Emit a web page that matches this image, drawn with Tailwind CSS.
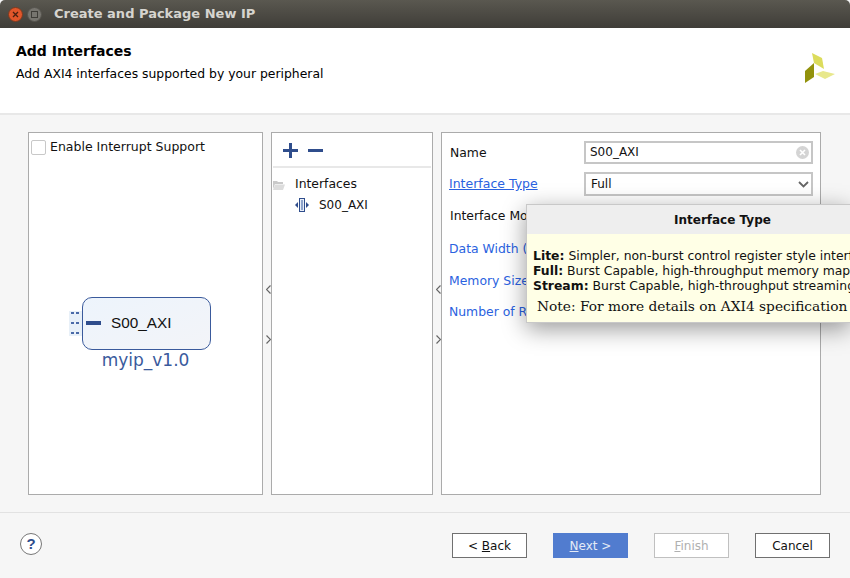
<!DOCTYPE html>
<html lang="en">
<head>
    <meta charset="UTF-8">
    <title>Create and Package New IP</title>
    <script src="https://cdn.jsdelivr.net/npm/@tailwindcss/browser@4"></script>
</head>
<body class="w-[850px] h-[578px] overflow-hidden relative flex flex-col bg-[#f6f6f6] font-['DejaVu_Sans',sans-serif] text-[12px] text-black">

    <!-- Title bar -->
    <div class="h-[28px] shrink-0 flex items-center bg-gradient-to-b from-[#5a5850] to-[#3f3d38] rounded-t-[5px]">
        <div class="w-[15px] h-[15px] ml-[8px] rounded-full bg-[#e2562a] border border-[#7a3a20] flex items-center justify-center">
            <svg width="7" height="7" viewBox="0 0 7 7"><path d="M1 1l5 5M6 1l-5 5" stroke="#4a2010" stroke-width="1.3"/></svg>
        </div>
        <div class="w-[15px] h-[15px] ml-[4px] rounded-full bg-[#77756f] border border-[#55534d] flex items-center justify-center">
            <div class="w-[7px] h-[7px] border border-[#3f3d38]"></div>
        </div>
        <span class="ml-[12px] font-bold text-[13px] text-[#d6d4cf]">Create and Package New IP</span>
    </div>

    <!-- Page header -->
    <div class="h-[87px] shrink-0 bg-white border-b-2 border-[#e8e8e8] flex justify-between pl-[16px] pr-[15px] pt-[15px]">
        <div>
            <h1 class="font-bold text-[14px] leading-[17px]">Add Interfaces</h1>
            <p class="mt-[6px] text-[12.4px] leading-[15px]">Add AXI4 interfaces supported by your peripheral</p>
        </div>
        <svg class="mt-[10px]" width="30" height="30" viewBox="0 0 30 30">
            <path d="M7 0l10 5 2 11-10-6z" fill="#dcdc5c"/>
            <path d="M10 21l8-3 12 3-10 5z" fill="#e8e88c"/>
            <path d="M0 18l9-8v14l-9 6z" fill="#92920c"/>
        </svg>
    </div>

    <!-- Panels -->
    <div class="h-[398px] shrink-0 flex gap-[8px] pl-[28px] pt-[17px] pb-[17px] border-b border-[#e2e2e2]">

        <!-- Diagram panel -->
        <div class="w-[235px] bg-white border border-[#ababab] relative">
            <label class="flex items-center h-[28px] pl-[2px]">
                <span class="w-[15px] h-[15px] bg-white border border-[#c8c8c8] rounded-[2px]"></span>
                <span class="ml-[4px] text-[12.5px] text-[#111]">Enable Interrupt Support</span>
            </label>
            <div class="absolute left-[53px] top-[164px] w-[129px] h-[53px] rounded-[10px] border border-[#3a5a9c] bg-gradient-to-br from-[#edf4fc] to-[#f3f4f8] flex items-center">
                <span class="ml-[28px] text-[#111] font-['Liberation_Sans',sans-serif] text-[15.3px]">S00_AXI</span>
            </div>
            <svg class="absolute left-[40px] top-[178px]" width="13" height="25" viewBox="0 0 13 25">
                <rect width="13" height="25" fill="#e8f0f8"/>
                <path d="M2 1h3v2H2zM7 1h3v2H7zM2 11h3v2H2zM7 11h3v2H7zM2 21h3v2H2zM7 21h3v2H7z" fill="#4a6aa8"/>
            </svg>
            <div class="absolute left-[57px] top-[188px] w-[15px] h-[4px] bg-[#2f4d8c]"></div>
            <div class="absolute left-0 right-0 top-[217px] text-center text-[17px] leading-[20px] text-[#3a5a9c]">myip_v1.0</div>
            <svg class="absolute right-[-9px] top-[152px]" width="5" height="9" viewBox="0 0 5 9"><path d="M4.5.5l-4 4 4 4" fill="none" stroke="#666" stroke-width="1.2"/></svg>
            <svg class="absolute right-[-9px] top-[202px]" width="5" height="9" viewBox="0 0 5 9"><path d="M.5.5l4 4-4 4" fill="none" stroke="#666" stroke-width="1.2"/></svg>
        </div>

        <!-- Interface tree panel -->
        <div class="w-[162px] bg-white border border-[#ababab] relative">
            <div class="h-[35px] mx-[1px] pt-[1px] border-b-2 border-[#e8e8e8] flex items-center pl-[10px] gap-[10px]">
                <svg width="15" height="15" viewBox="0 0 15 15"><path d="M6 0h3v6h6v3H9v6H6V9H0V6h6z" fill="#2f4d8c"/></svg>
                <div class="w-[15px] h-[3px] bg-[#2f4d8c]"></div>
            </div>
            <div class="flex items-center h-[17px] mt-[8px] pl-[1px]">
                <svg width="12" height="10" viewBox="0 0 12 10"><path d="M0 1h4l1 1h5v2H2L0 9z" fill="#c9c9c9"/><path d="M2 4.500h10L10 10H0z" fill="#dcdcdc"/></svg>
                <span class="ml-[10px] text-[12.4px] text-[#111]">Interfaces</span>
            </div>
            <div class="flex items-center h-[17px] mt-[3px] pl-[23px]">
                <svg width="14" height="14" viewBox="0 0 14 14"><path d="M0 7l3-3v6z" fill="#2f4d8c"/><path d="M14 7l-3-3v6z" fill="#2f4d8c"/><rect x="4.500" y=".5" width="5" height="13" fill="#e8eef8" stroke="#2f4d8c"/><rect x="6" y="2" width="2" height="10" fill="#8fa5cc"/></svg>
                <span class="ml-[10px] text-[#111]">S00_AXI</span>
            </div>
            <svg class="absolute right-[-9px] top-[152px]" width="5" height="9" viewBox="0 0 5 9"><path d="M4.500.5l-4 4 4 4" fill="none" stroke="#666" stroke-width="1.2"/></svg>
            <svg class="absolute right-[-9px] top-[202px]" width="5" height="9" viewBox="0 0 5 9"><path d="M.5.5l4 4-4 4" fill="none" stroke="#666" stroke-width="1.2"/></svg>
        </div>

        <!-- Properties panel -->
        <div class="w-[380px] bg-white border border-[#ababab] pt-[4px] pr-[7px] pl-[7px]">
            <div class="grid grid-cols-[135px_1fr] items-center grid-rows-[31px_31px_33px_32px_32px_31px] leading-[15px] text-[12.4px]">
                <span class="pl-[1px] text-[#111]">Name</span>
                <div class="h-[23px] border-2 border-[#c6c6c6] flex items-center justify-between pl-[4px] pr-[2px]">
                    <span class="text-[12px] text-[#111]">S00_AXI</span>
                    <div class="w-[13px] h-[13px] rounded-full bg-[#d4d4d4] flex items-center justify-center">
                        <svg width="7" height="7" viewBox="0 0 7 7"><path d="M1 1l5 5M6 1l-5 5" stroke="#fff" stroke-width="1.600"/></svg>
                    </div>
                </div>
                <a class="text-[12.5px] text-[#2a62e0] underline">Interface Type</a>
                <div class="h-[24px] pt-[1px] border-2 border-[#c6c6c6] flex items-center justify-between pl-[5px] pr-[2px]">
                    <span class="text-[12px] text-[#111]">Full</span>
                    <svg width="11" height="7" viewBox="0 0 11 7"><path d="M1 1l4.500 4.500L10 1" fill="none" stroke="#666" stroke-width="1.800"/></svg>
                </div>
                <span class="pl-[1px] text-[#111]">Interface Mode</span>
                <div class="h-[23px] border-2 border-[#c6c6c6]"></div>
                <span class="text-[#2a62e0]">Data Width (Bits)</span>
                <div class="h-[23px] border-2 border-[#c6c6c6]"></div>
                <span class="text-[#2a62e0]">Memory Size (Bytes)</span>
                <div class="h-[23px] border-2 border-[#c6c6c6]"></div>
                <span class="text-[#2a62e0]">Number of Registers</span>
                <div class="h-[23px] border-2 border-[#c6c6c6]"></div>
            </div>
        </div>
    </div>

    <!-- Footer -->
    <div class="flex-1 flex items-start pt-[20px] pl-[20px]">
        <div class="w-[22px] h-[22px] rounded-full bg-white border border-[#777] flex items-center justify-center font-['Liberation_Sans',sans-serif] font-bold text-[15px] text-[#2f4d8c]">?</div>
        <div class="ml-auto mr-[20px] flex gap-[26px]">
            <button class="w-[75px] h-[25px] bg-white border border-[#707070] text-[#111]">&lt; <span class="underline">B</span>ack</button>
            <button class="w-[75px] h-[25px] bg-[#517ccf] text-[#e4eaf6]"><span class="underline">N</span>ext &gt;</button>
            <button class="w-[75px] h-[25px] bg-white border border-[#c0c0c0] text-[#b0b0b0]"><span class="underline">F</span>inish</button>
            <button class="w-[75px] h-[25px] bg-white border border-[#707070] text-[#111]">Cancel</button>
        </div>
    </div>

    <!-- Tooltip, clipped by the window edge -->
    <div class="absolute left-[526px] top-[204px] w-[324px] h-[119px] overflow-hidden border border-r-0 border-[#c8c8c8] bg-[#ffffe6] shadow-[0_6px_22px_rgba(0,0,0,0.4)]">
        <div class="h-[29px] bg-[#eeeeee] flex items-center font-bold text-[#111] pl-[147px]">Interface Type</div>
        <div class="pt-[14px] pl-[6px] whitespace-nowrap leading-[15px] text-[12.4px] text-[#111]">
            <div><b>Lite:</b> Simpler, non-burst control register style interface</div>
            <div><b>Full:</b> Burst Capable, high-throughput memory mapped interface</div>
            <div><b>Stream:</b> Burst Capable, high-throughput streaming interface</div>
            <div class="mt-[5px] ml-[4px] font-['DejaVu_Serif',serif] text-[13.75px] leading-[17px]">Note: For more details on AXI4 specification</div>
        </div>
    </div>
</body>
</html>
